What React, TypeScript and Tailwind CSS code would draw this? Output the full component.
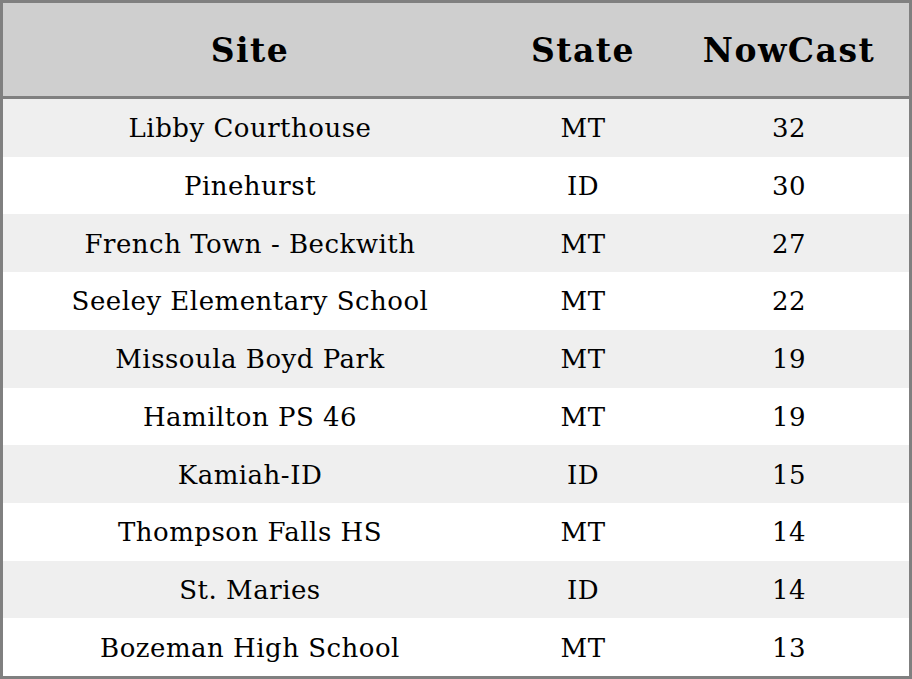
const rows = [
  { site: 'Libby Courthouse', state: 'MT', nowcast: 32 },
  { site: 'Pinehurst', state: 'ID', nowcast: 30 },
  { site: 'French Town - Beckwith', state: 'MT', nowcast: 27 },
  { site: 'Seeley Elementary School', state: 'MT', nowcast: 22 },
  { site: 'Missoula Boyd Park', state: 'MT', nowcast: 19 },
  { site: 'Hamilton PS 46', state: 'MT', nowcast: 19 },
  { site: 'Kamiah-ID', state: 'ID', nowcast: 15 },
  { site: 'Thompson Falls HS', state: 'MT', nowcast: 14 },
  { site: 'St. Maries', state: 'ID', nowcast: 14 },
  { site: 'Bozeman High School', state: 'MT', nowcast: 13 },
]

export default function App() {
  return (
    <div className="w-[912px] h-[679px] bg-white font-['DejaVu_Serif',serif] text-black">
      <div className="h-full border-[3px] border-[#808080] flex flex-col">
        <div className="h-[96px] shrink-0 flex items-center pt-[2px] bg-[#cfcfcf] border-b-[3px] border-[#808080] font-bold text-[33px] tracking-[1.5px]">
          <div className="w-[494px] text-center">Site</div>
          <div className="w-[172px] text-center">State</div>
          <div className="flex-1 text-center">NowCast</div>
        </div>
        <div className="flex-1 flex flex-col">
          {rows.map((r, i) => (
            <div
              key={r.site}
              className={`flex-1 flex items-center pt-[2px] text-[26px] tracking-[0.5px] ${i % 2 === 0 ? 'bg-[#efefef]' : 'bg-white'}`}
            >
              <div className="w-[494px] text-center">{r.site}</div>
              <div className="w-[172px] text-center">{r.state}</div>
              <div className="flex-1 text-center">{r.nowcast}</div>
            </div>
          ))}
        </div>
      </div>
    </div>
  )
}
